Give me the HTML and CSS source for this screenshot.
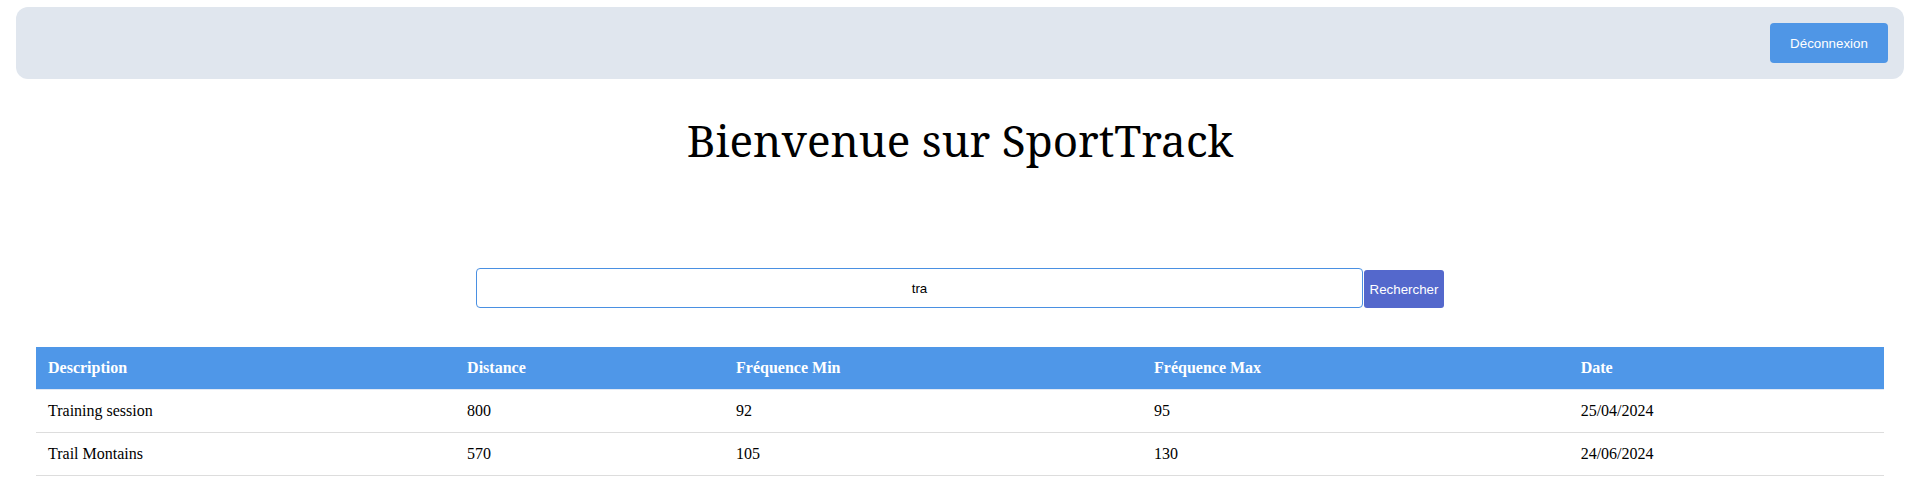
FILE: index.html
```html
<!DOCTYPE html>
<html lang="fr">
<head>
<meta charset="utf-8">
<title>SportTrack</title>
<link rel="stylesheet" href="styles.css">
</head>
<body>
<nav class="topbar">
  <button class="btn-logout" type="button">Déconnexion</button>
</nav>
<h1 class="title">Bienvenue sur SportTrack</h1>
<form class="search">
  <input class="search-input" type="text" value="tra">
  <button class="btn-search" type="button">Rechercher</button>
</form>
<div class="table-wrap">
  <table class="activities">
    <thead>
      <tr><th>Description</th><th>Distance</th><th>Fréquence Min</th><th>Fréquence Max</th><th>Date</th></tr>
    </thead>
    <tbody>
      <tr><td>Training session</td><td>800</td><td>92</td><td>95</td><td>25/04/2024</td></tr>
      <tr><td>Trail Montains</td><td>570</td><td>105</td><td>130</td><td>24/06/2024</td></tr>
    </tbody>
  </table>
</div>
</body>
</html>
```
FILE: styles.css
```css
html, body {
  margin: 0;
  padding: 0;
  background: #ffffff;
}
body {
  font-family: "Liberation Serif", "Times New Roman", serif;
  color: #000;
}
.topbar {
  margin: 7px 16px 0;
  height: 72px;
  background: #e0e6ee;
  border-radius: 12px;
  display: flex;
  align-items: center;
  justify-content: flex-end;
  padding: 0 16px;
  box-sizing: border-box;
}
.btn-logout {
  width: 118px;
  height: 40px;
  border: none;
  border-radius: 4px;
  background: #4f96e6;
  color: #ffffff;
  font-family: "Liberation Sans", Arial, sans-serif;
  font-size: 13.33px;
  cursor: pointer;
}
.title {
  font-family: "Noto Serif", "DejaVu Serif", serif;
  font-weight: 400;
  font-size: 44px;
  text-align: center;
  margin: 31px 0 0;
}
.search {
  display: flex;
  justify-content: center;
  align-items: flex-end;
  gap: 1px;
  margin: 98px 0 0;
}
.search-input {
  width: 887px;
  height: 40px;
  box-sizing: border-box;
  border: 1px solid #4a90e2;
  border-radius: 4px;
  text-align: center;
  font-family: "Liberation Sans", Arial, sans-serif;
  font-size: 13.33px;
  color: #000;
  outline: none;
  padding: 0 8px;
}
.btn-search {
  width: 80px;
  height: 38px;
  border: none;
  border-radius: 3px;
  background: #5468cc;
  color: #ffffff;
  font-family: "Liberation Sans", Arial, sans-serif;
  font-size: 13.33px;
  padding: 0;
  cursor: pointer;
}
.table-wrap {
  margin: 39px 36px 0;
}
.activities {
  width: 100%;
  border-collapse: collapse;
  font-size: 16px;
}
.activities th,
.activities td {
  text-align: left;
  padding: 12px;
  line-height: 18px;
  border-bottom: 1px solid #dddddd;
}
.activities th {
  background: #4f97e8;
  color: #ffffff;
  font-weight: 700;
  border-bottom-color: #e0e8f4;
}
```
